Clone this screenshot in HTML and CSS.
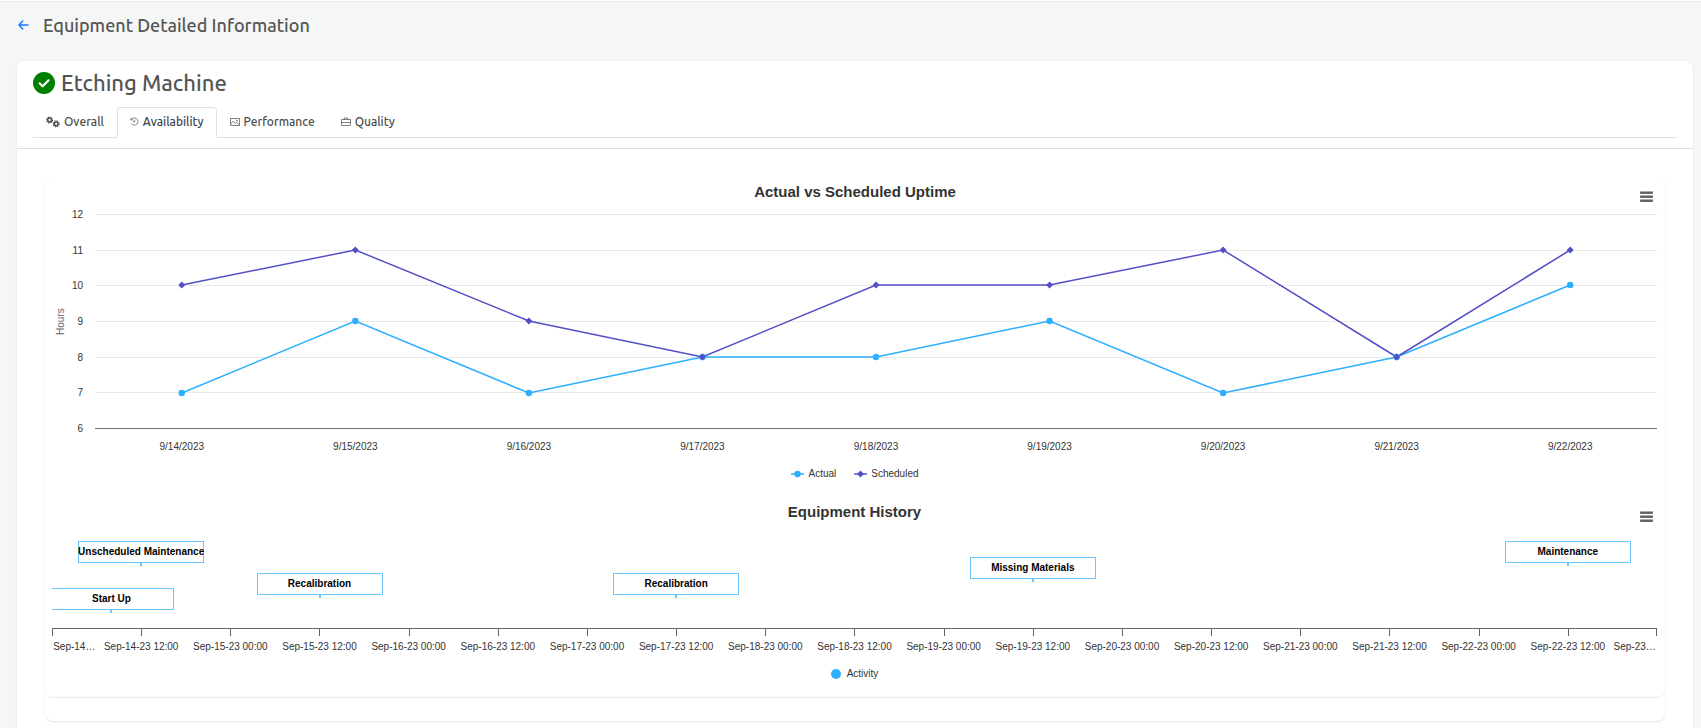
FILE: index.html
```html
<!DOCTYPE html>
<html lang="en">
<head>
<meta charset="utf-8">
<title>Equipment Detailed Information</title>
<link rel="stylesheet" href="styles.css">
</head>
<body>
<header class="page-header">
  <a class="back" href="#" aria-label="Back">
    <svg width="11" height="10" viewBox="0 0 11 10" fill="none" stroke="currentColor" stroke-width="1.4" stroke-linecap="round" stroke-linejoin="round"><path d="M10 5H1M4.800 1L.9 5l3.900 4"/></svg>
  </a>
  <h1>Equipment Detailed Information</h1>
</header>
<main class="card">
  <div class="card-head">
    <div class="machine">
      <svg width="22" height="22" viewBox="0 0 22 22" aria-hidden="true"><circle cx="11" cy="11" r="11" fill="#008000"/><path d="M6.600 11.300l3 3 6-6" fill="none" stroke="#fff" stroke-width="2.200" stroke-linecap="round" stroke-linejoin="round"/></svg>
      <h2>Etching Machine</h2>
    </div>
    <nav class="tabs" role="tablist">
      <button class="tab" role="tab" type="button">
        <svg width="14" height="12" viewBox="0 0 14 12" fill="none" stroke="currentColor"><circle cx="3.600" cy="4" r="1.900" stroke-width="1.500"/><circle cx="3.600" cy="4" r="2.900" stroke-width="1.300" stroke-dasharray="1.200 1.078"/><circle cx="10.200" cy="7.800" r="1.900" stroke-width="1.500"/><circle cx="10.200" cy="7.800" r="2.900" stroke-width="1.300" stroke-dasharray="1.200 1.078"/></svg>
        Overall</button>
      <button class="tab active" role="tab" type="button" aria-selected="true">
        <svg width="9" height="9" viewBox="0 0 10 10" fill="none" stroke="currentColor" stroke-width=".7"><path d="M1.300 3.200A4 4 0 1 1 1.500 7.200M1 .9v2.400h2.400M5.200 2.800v2.500h-2"/></svg>
        Availability</button>
      <button class="tab" role="tab" type="button">
        <svg width="10" height="10" viewBox="0 0 10 10" fill="none" stroke="currentColor" stroke-width=".7"><path d="M.5 1.500h9v7h-9zM.6 7.200l2.600-3 2.200 2.400 1.300-1.300 2.700 2.600"/><circle cx="6.800" cy="3.500" r=".5"/></svg>
        Performance</button>
      <button class="tab" role="tab" type="button">
        <svg width="10" height="10" viewBox="0 0 10 10" fill="none" stroke="currentColor" stroke-width=".7"><path d="M.5 2.500h9v6h-9zM3.300 2.500V1h3.400v1.500M.5 5.500h9"/></svg>
        Quality</button>
    </nav>
  </div>
  <div class="card-body">
    <div class="panel">
      <div class="charts">
        <section class="chart uptime">
          <h3>Actual vs Scheduled Uptime</h3>
          <button class="menu" type="button" aria-label="Uptime chart menu"><i></i><i></i><i></i></button>
          <div class="plot-row">
            <span class="axis-title">Hours</span>
            <div class="y-labels"><span>12</span><span>11</span><span>10</span><span>9</span><span>8</span><span>7</span><span>6</span></div>
            <div class="plot">
              <svg class="layer" width="100%" height="216" aria-hidden="true">
                <defs><path id="diamond" d="M0-3.500L3.500 0 0 3.500-3.500 0z"/></defs>
                <g stroke="#e9e9e9" shape-rendering="crispEdges">
                  <line x2="100%" y1=".5" y2=".5"/><line x2="100%" y1="36.500" y2="36.500"/><line x2="100%" y1="71.500" y2="71.500"/><line x2="100%" y1="107.500" y2="107.500"/><line x2="100%" y1="143.500" y2="143.500"/><line x2="100%" y1="178.500" y2="178.500"/>
                </g>
                <line x2="100%" y1="214.500" y2="214.500" stroke="#6e6e73" shape-rendering="crispEdges"/>
                <svg width="100%" height="216" viewBox="0 0 18 216" preserveAspectRatio="none" fill="none">
                  <polyline points="1,179 3,107 5,179 7,143 9,143 11,107 13,179 15,143 17,71" stroke="#2caffe" stroke-width="1.500" vector-effect="non-scaling-stroke"/>
                  <polyline points="1,71 3,36 5,107 7,143 9,71 11,71 13,36 15,143 17,36" stroke="#544fc5" stroke-width="1.500" vector-effect="non-scaling-stroke"/>
                </svg>
                <g fill="#2caffe">
                  <circle cx="5.556%" cy="179" r="3.200"/><circle cx="16.667%" cy="107" r="3.200"/><circle cx="27.778%" cy="179" r="3.200"/><circle cx="38.889%" cy="143" r="3.200"/><circle cx="50%" cy="143" r="3.200"/><circle cx="61.111%" cy="107" r="3.200"/><circle cx="72.222%" cy="179" r="3.200"/><circle cx="83.333%" cy="143" r="3.200"/><circle cx="94.444%" cy="71" r="3.200"/>
                </g>
                <g fill="#544fc5">
                  <use href="#diamond" x="5.556%" y="71"/><use href="#diamond" x="16.667%" y="36"/><use href="#diamond" x="27.778%" y="107"/><use href="#diamond" x="38.889%" y="143"/><use href="#diamond" x="50%" y="71"/><use href="#diamond" x="61.111%" y="71"/><use href="#diamond" x="72.222%" y="36"/><use href="#diamond" x="83.333%" y="143"/><use href="#diamond" x="94.444%" y="36"/>
                </g>
              </svg>
              <div class="x-labels"><span>9/14/2023</span><span>9/15/2023</span><span>9/16/2023</span><span>9/17/2023</span><span>9/18/2023</span><span>9/19/2023</span><span>9/20/2023</span><span>9/21/2023</span><span>9/22/2023</span></div>
            </div>
          </div>
          <div class="legend">
            <span><svg width="13" height="8" viewBox="0 0 13 8"><path d="M0 4h13" stroke="#2caffe" stroke-width="1.500"/><circle cx="6.500" cy="4" r="3.200" fill="#2caffe"/></svg>Actual</span>
            <span><svg width="13" height="8" viewBox="0 0 13 8"><path d="M0 4h13" stroke="#544fc5" stroke-width="1.500"/><path d="M6.500 .5L10 4 6.500 7.500 3 4z" fill="#544fc5"/></svg>Scheduled</span>
          </div>
        </section>
        <section class="chart history">
          <h3>Equipment History</h3>
          <button class="menu" type="button" aria-label="History chart menu"><i></i><i></i><i></i></button>
          <div class="lane">
            <div class="event row-1" style="left:5.556%">Unscheduled Maintenance</div>
            <div class="event row-4" style="left:3.704%">Start Up</div>
            <div class="event row-3" style="left:16.667%">Recalibration</div>
            <div class="event row-3" style="left:38.889%">Recalibration</div>
            <div class="event row-2" style="left:61.111%">Missing Materials</div>
            <div class="event row-1" style="left:94.444%">Maintenance</div>
          </div>
          <div class="ticks"><i></i><i></i><i></i><i></i><i></i><i></i><i></i><i></i><i></i><i></i><i></i><i></i><i></i><i></i><i></i><i></i><i></i><i></i></div>
          <div class="time-labels"><span>Sep-14…</span><span>Sep-14-23 12:00</span><span>Sep-15-23 00:00</span><span>Sep-15-23 12:00</span><span>Sep-16-23 00:00</span><span>Sep-16-23 12:00</span><span>Sep-17-23 00:00</span><span>Sep-17-23 12:00</span><span>Sep-18-23 00:00</span><span>Sep-18-23 12:00</span><span>Sep-19-23 00:00</span><span>Sep-19-23 12:00</span><span>Sep-20-23 00:00</span><span>Sep-20-23 12:00</span><span>Sep-21-23 00:00</span><span>Sep-21-23 12:00</span><span>Sep-22-23 00:00</span><span>Sep-22-23 12:00</span><span>Sep-23…</span></div>
          <div class="legend"><span><svg width="10" height="10" viewBox="0 0 10 10"><circle cx="5" cy="5" r="5" fill="#2caffe"/></svg>Activity</span></div>
        </section>
      </div>
    </div>
  </div>
</main>
</body>
</html>
```

FILE: styles.css
```css
* { box-sizing: border-box; }

body {
  margin: 0;
  height: 100vh;
  overflow: hidden;
  display: flex;
  flex-direction: column;
  background: #f5f7f7;
  border-top: 1px solid #fafbfb;
  color: #555;
  font-family: Ubuntu, "Noto Sans", sans-serif;
}

h1, h2, h3 { margin: 0; }

.page-header {
  display: flex;
  align-items: center;
  gap: 14px;
  height: 60px;
  padding: 0 18px 14px;
  border-top: 1px solid #e9ecec;
  flex: none;
}

.back { display: flex; color: #1a75ff; }

h1 { font-size: 18px; line-height: 24px; font-weight: 500; }

.card {
  flex: 1 0 auto;
  margin: 0 8px 0 17px;
  background: #fff;
  border-radius: 8px 8px 0 0;
  box-shadow: 0 0 3px rgba(0, 0, 0, .06);
}

.card-head { padding: 8px 16px 10px; border-bottom: 1px solid #dcdfe1; }

.machine { display: flex; align-items: center; gap: 6px; height: 28px; }

h2 { font-size: 22px; line-height: 28px; font-weight: 500; }

.tabs {
  display: flex;
  margin-top: 10px;
  border-bottom: 1px solid #dee2e6;
}

.tab {
  display: flex;
  align-items: center;
  gap: 4px;
  height: 31px;
  margin-bottom: -1px;
  padding: 0 12px 2px;
  border: 1px solid transparent;
  border-radius: 4px 4px 0 0;
  background: none;
  color: #4d4d4d;
  font: 500 12px/16px Ubuntu, "Noto Sans", sans-serif;
}

.tab.active {
  background: #fff;
  border-color: #dee2e6 #dee2e6 #fff;
  color: #3f464d;
}

.card-body { padding: 28px; }

.panel {
  padding-bottom: 24px;
  border-radius: 8px;
  box-shadow: 0 1px 2px rgba(0, 0, 0, .12);
}

.charts { border-radius: 8px; box-shadow: 0 1px 1px rgba(0, 0, 0, .08); }

.chart {
  position: relative;
  color: #333;
  font: 10px/12px "Liberation Sans", Arial, sans-serif;
}

.uptime { height: 320px; }
.history { height: 200px; padding: 0 8px 0 7px; }

h3 {
  height: 30px;
  text-align: center;
  font-size: 15px;
  line-height: 30px;
  font-weight: 700;
}

.menu {
  position: absolute;
  top: 14px;
  right: 12px;
  display: grid;
  gap: 1px;
  width: 13px;
  padding: 0;
  border: 0;
  background: none;
}

.menu i { height: 3px; border: 1px solid #aaa; border-width: 1px 0 0; border-radius: 1px; background: #666; }

.plot-row { display: flex; padding: 7px 8px 0 10px; }

.axis-title {
  width: 12px;
  height: 216px;
  text-align: center;
  writing-mode: vertical-rl;
  transform: rotate(180deg);
  color: #666;
}

.y-labels {
  display: flex;
  flex-direction: column;
  justify-content: space-between;
  width: 16px;
  height: 226px;
  margin: -5px 12px 0 0;
  text-align: right;
}

.plot { flex: 1; }
.layer { display: block; overflow: visible; }

.x-labels {
  display: grid;
  grid-template-columns: repeat(9, 1fr);
  margin-top: 11px;
  text-align: center;
}

.legend { display: flex; justify-content: center; gap: 18px; }
.legend span { display: flex; align-items: center; gap: 4px; }
.uptime .legend { margin-top: 15px; }
.history .legend { margin-top: 15px; }
.history .legend span { gap: 6px; }

.lane { position: relative; height: 101px; overflow: hidden; }

.event {
  position: absolute;
  display: flex;
  justify-content: center;
  width: 126px;
  height: 22px;
  transform: translateX(-50%);
  border: 1px solid #6ac5fb;
  background: #fff;
  color: #000;
  font-weight: 700;
  line-height: 20px;
  white-space: nowrap;
}

.event::after {
  content: "";
  position: absolute;
  top: 100%;
  left: 50%;
  width: 2px;
  height: 4px;
  margin-left: -1px;
  background: #6ac5fb;
}

.row-1 { top: 14px; }
.row-2 { top: 30px; }
.row-3 { top: 46px; }
.row-4 { top: 61px; }

.ticks {
  display: grid;
  grid-template-columns: repeat(18, 1fr);
  height: 8px;
  border-top: 1px solid #666;
}

.ticks i { border-left: 1px solid #666; }
.ticks i:last-child { border-right: 1px solid #666; }

.time-labels {
  display: grid;
  grid-template-columns: repeat(36, 1fr);
  margin-top: 5px;
  text-align: center;
  white-space: nowrap;
}

.time-labels span { grid-column: span 2; }
.time-labels span:first-child,
.time-labels span:last-child { grid-column: span 1; }
```
